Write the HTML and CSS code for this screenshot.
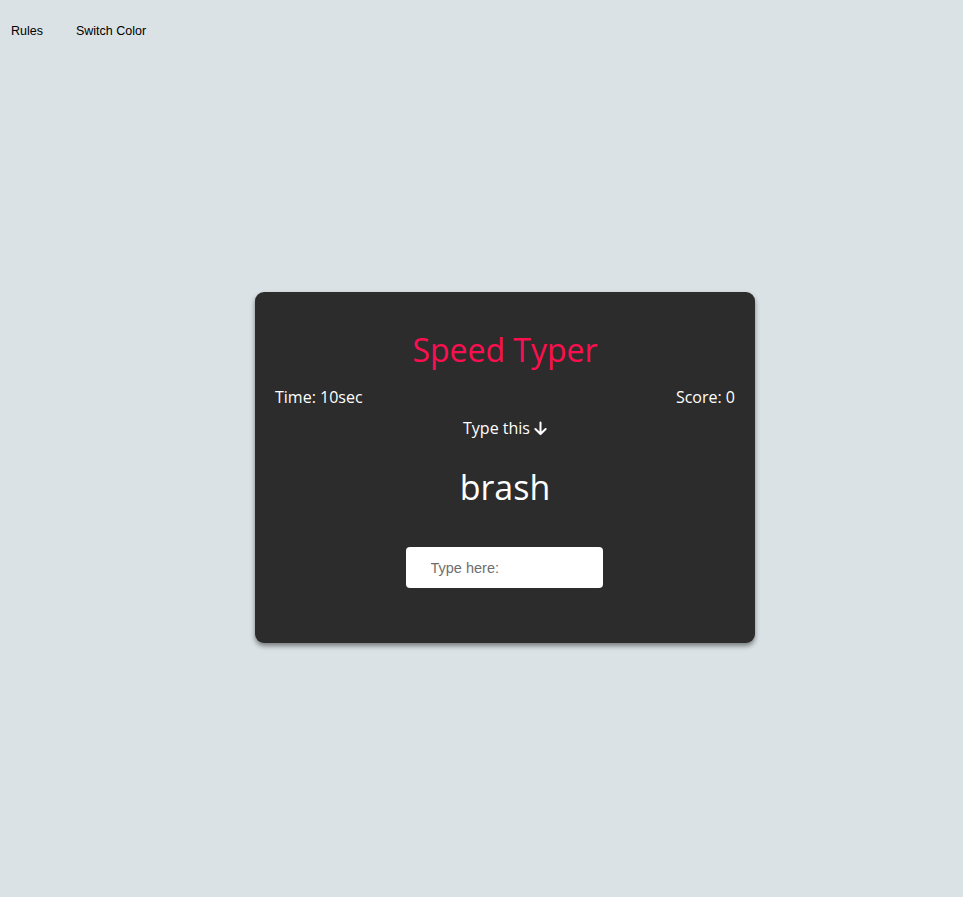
FILE: index.html
```html
<!DOCTYPE html>
<html lang="en">
<head>
<meta charset="utf-8">
<title>Speed Typer</title>
<link rel="stylesheet" href="styles.css">
</head>
<body>
<nav class="nav">
  <a class="nav-link" href="#">Rules</a>
  <a class="nav-link" href="#">Switch Color</a>
</nav>
<main class="stage">
  <section class="card">
    <h1 class="title">Speed Typer</h1>
    <div class="stats">
      <span class="stat">Time: 10sec</span>
      <span class="stat">Score: 0</span>
    </div>
    <p class="hint">Type this <svg class="arrow" viewBox="0 0 14 16" width="13" height="15"><path d="M7 1.5V14M1.5 8.5L7 14l5.5-5.5" fill="none" stroke="#fff" stroke-width="2.2" stroke-linecap="round" stroke-linejoin="round"/></svg></p>
    <p class="word">brash</p>
    <input class="entry" type="text" placeholder="Type here:">
  </section>
</main>
</body>
</html>
```
FILE: styles.css
```css
* { box-sizing: border-box; }
html, body { margin: 0; padding: 0; }
body {
  background: #dbe2e5;
  font-family: "Open Sans", sans-serif;
  min-height: 897px;
}
.nav {
  display: flex;
  padding: 24px 0 0 11px;
}
.nav-link {
  font-family: "Liberation Sans", Arial, sans-serif;
  font-size: 12.5px;
  color: #000;
  text-decoration: none;
  margin-right: 33px;
}
.stage {
  display: flex;
  padding: 254px 0 0 255px;
}
.card {
  width: 500px;
  height: 351px;
  background: #2c2c2c;
  border-radius: 9px;
  box-shadow: 0 3px 5px rgba(0, 0, 0, 0.45);
  display: flex;
  flex-direction: column;
  align-items: center;
  padding: 37px 20px 0;
  color: #fff;
}
.title {
  margin: 0;
  font-weight: 400;
  font-size: 32px;
  line-height: 42px;
  color: #fb0f4f;
}
.stats {
  align-self: stretch;
  display: flex;
  justify-content: space-between;
  margin-top: 15px;
  font-size: 16px;
  line-height: 22px;
}
.hint {
  margin: 9px 0 0;
  font-size: 16px;
  line-height: 22px;
  display: flex;
  align-items: center;
  gap: 4px;
}
.word {
  margin: 25px 0 0;
  font-size: 34px;
  line-height: 46px;
}
.entry {
  margin-top: 37px;
  margin-right: 2px;
  width: 197px;
  height: 41px;
  border: none;
  border-radius: 4px;
  background: #fff;
  padding: 0 25px;
  font-family: "Liberation Sans", Arial, sans-serif;
  font-size: 14.5px;
  outline: none;
}
.entry::placeholder { color: #6e6e6e; }
```
